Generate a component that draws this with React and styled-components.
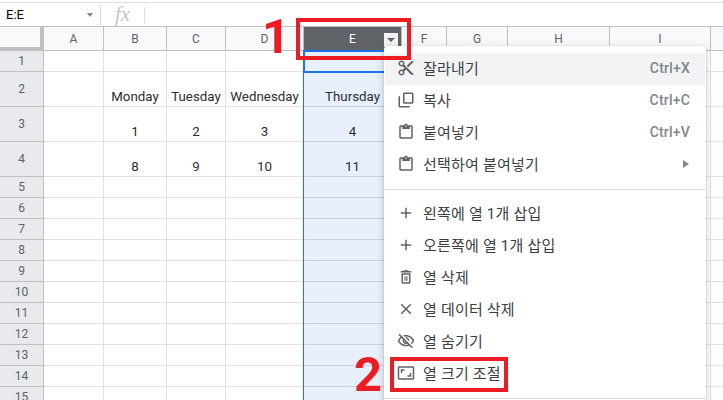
import React from 'react'
import styled, { createGlobalStyle } from 'styled-components'

const GlobalStyle = createGlobalStyle`
    html, body {
        margin: 0;
        padding: 0;
        background: #fff;
    }
    body {
        font-family: Roboto, "Noto Sans CJK KR", sans-serif;
    }
`

const COLUMNS = ['A', 'B', 'C', 'D', 'E', 'F', 'G', 'H', 'I', '']
const ROW_HEIGHTS = [21, 35, 35, 35, 21, 21, 21, 21, 21, 21, 21, 21, 21, 21, 21]
const CELLS = {
    'B2': 'Monday', 'C2': 'Tuesday', 'D2': 'Wednesday', 'E2': 'Thursday',
    'B3': '1', 'C3': '2', 'D3': '3', 'E3': '4',
    'B4': '8', 'C4': '9', 'D4': '10', 'E4': '11',
}

const ICONS = {
    cut: 'M9.64 7.64c.23-.5.36-1.05.36-1.64 0-2.21-1.79-4-4-4S2 3.79 2 6s1.79 4 4 4c.59 0 1.14-.13 1.64-.36L10 12l-2.36 2.36C7.14 14.13 6.59 14 6 14c-2.21 0-4 1.79-4 4s1.79 4 4 4 4-1.79 4-4c0-.59-.13-1.14-.36-1.64L12 14l7 7h3v-1L9.64 7.64zM6 8c-1.1 0-2-.89-2-2s.9-2 2-2 2 .89 2 2-.9 2-2 2zm0 12c-1.1 0-2-.89-2-2s.9-2 2-2 2 .89 2 2-.9 2-2 2zm6-7.5c-.28 0-.5-.22-.5-.5s.22-.5.5-.5.5.22.5.5-.22.5-.5.5zM19 3l-6 6 2 2 7-7V3z',
    copy: 'M20 2H10c-1.1 0-2 .9-2 2v11c0 1.1.9 2 2 2h10c1.1 0 2-.9 2-2V4c0-1.1-.9-2-2-2zm0 13H10V4h10v11zM4 7H2v13c0 1.1.9 2 2 2h13v-2H4V7z',
    paste: 'M19 3h-4.18C14.4 1.84 13.3 1 12 1c-1.3 0-2.4.84-2.82 2H5c-1.1 0-2 .9-2 2v14c0 1.1.9 2 2 2h14c1.1 0 2-.9 2-2V5c0-1.1-.9-2-2-2zm-7 0c.55 0 1 .45 1 1s-.45 1-1 1-1-.45-1-1 .45-1 1-1zm7 16H5V5h2v3h10V5h2v14z',
    plus: 'M19 13h-6v6h-2v-6H5v-2h6V5h2v6h6v2z',
    trash: 'M6 19c0 1.1.9 2 2 2h8c1.1 0 2-.9 2-2V7H6v12zM8 9h8v10H8V9zm7.5-5l-1-1h-5l-1 1H5v2h14V4zM10 11h1.500v6H10zm2.500 0H14v6h-1.500z',
    close: 'M19 6.410L17.590 5 12 10.590 6.410 5 5 6.410 10.590 12 5 17.590 6.410 19 12 13.410 17.590 19 19 17.590 13.410 12z',
    hide: 'M12 6c3.790 0 7.170 2.130 8.820 5.500-.59 1.220-1.420 2.270-2.410 3.120l1.410 1.410c1.390-1.230 2.490-2.770 3.180-4.530C21.270 7.110 17 4 12 4c-1.270 0-2.490.2-3.640.57l1.650 1.650C10.660 6.090 11.320 6 12 6zm-1.070 1.140L13 9.210c.57.25 1.030.71 1.280 1.280l2.070 2.070c.08-.34.14-.7.14-1.070C16.500 9.010 14.480 7 12 7c-.37 0-.72.05-1.070.14zM2.010 3.870l2.680 2.680C3.060 7.830 1.770 9.530 1 11.500 2.730 15.890 7 19 12 19c1.520 0 2.980-.29 4.320-.82l3.420 3.420 1.410-1.410L3.420 2.450 2.010 3.870zm7.500 7.500l2.610 2.610c-.04.01-.08.02-.12.02-1.380 0-2.500-1.120-2.500-2.500 0-.5.01-.9.010-.13zm-3.400-3.400l1.750 1.750c-.23.55-.36 1.150-.36 1.780 0 2.480 2.020 4.500 4.500 4.500.63 0 1.230-.13 1.770-.36l.98.98c-.88.24-1.800.38-2.750.38-3.790 0-7.170-2.130-8.820-5.500.7-1.430 1.720-2.610 2.930-3.530z',
    resize: 'M19 12h-2v3h-3v2h5v-5zM7 9h3V7H5v5h2V9zm14-6H3c-1.100 0-2 .9-2 2v14c0 1.100.9 2 2 2h18c1.100 0 2-.9 2-2V5c0-1.100-.9-2-2-2zm0 16.010H3V4.990h18v14.020z',
}

const MENU_GROUPS = [
    [
        { icon: 'cut', label: '잘라내기', shortcut: 'Ctrl+X', hover: true },
        { icon: 'copy', label: '복사', shortcut: 'Ctrl+C' },
        { icon: 'paste', label: '붙여넣기', shortcut: 'Ctrl+V' },
        { icon: 'paste', label: '선택하여 붙여넣기', submenu: true },
    ],
    [
        { icon: 'plus', label: '왼쪽에 열 1개 삽입' },
        { icon: 'plus', label: '오른쪽에 열 1개 삽입' },
        { icon: 'trash', label: '열 삭제' },
        { icon: 'close', label: '열 데이터 삭제' },
        { icon: 'hide', label: '열 숨기기' },
        { icon: 'resize', label: '열 크기 조절' },
    ],
]

function App() {
    return (
        <Page>
            <GlobalStyle />
            <FormulaBar>
                <NameBox>
                    <span>E:E</span>
                    <Caret />
                </NameBox>
                <FxBox>
                    <Fx>fx</Fx>
                </FxBox>
            </FormulaBar>

            <Sheet>
                <Corner />
                {COLUMNS.map((col) => (
                    <ColHead key={col || 'J'} $selected={col === 'E'}>
                        {col}
                        {col === 'E' && <HeadButton />}
                    </ColHead>
                ))}

                {ROW_HEIGHTS.map((height, i) => (
                    <React.Fragment key={i}>
                        <RowHead $height={height}>{i + 1}</RowHead>
                        {COLUMNS.map((col) => (
                            <Cell
                                key={col || 'J'}
                                $height={height}
                                $selected={col === 'E'}
                                $active={col === 'E' && i === 0}
                            >
                                {CELLS[`${col}${i + 1}`]}
                            </Cell>
                        ))}
                    </React.Fragment>
                ))}
            </Sheet>

            <Menu>
                {MENU_GROUPS.map((group, g) => (
                    <MenuGroup key={g}>
                        {group.map((item) => (
                            <MenuItem key={item.label} $hover={item.hover}>
                                <MenuIcon viewBox="0 0 24 24">
                                    <path d={ICONS[item.icon]} />
                                </MenuIcon>
                                <MenuLabel>{item.label}</MenuLabel>
                                {item.shortcut && <Shortcut>{item.shortcut}</Shortcut>}
                                {item.submenu && <SubArrow />}
                            </MenuItem>
                        ))}
                    </MenuGroup>
                ))}
            </Menu>

            <Callout $left={296} $top={18} $width={115} $height={42} />
            <Callout $left={390} $top={357} $width={118} $height={35} />
            <Step $left={262} $top={12}>1</Step>
            <Step $left={354} $top={350}>2</Step>
        </Page>
    )
}

const Page = styled.div`
    position: relative;
    width: 723px;
    height: 400px;
    overflow: hidden;
    background: #fff;
`

const FormulaBar = styled.div`
    display: flex;
    align-items: center;
    height: 23px;
    margin-top: 2px;
    border-top: 1px solid #e0e0e0;
`

const NameBox = styled.div`
    display: flex;
    align-items: center;
    justify-content: space-between;
    box-sizing: border-box;
    width: 101px;
    height: 20px;
    padding: 0 6px;
    border-right: 1px solid #dadce0;
    font-size: 13px;
    color: #000;
`

const Caret = styled.i`
    width: 0;
    height: 0;
    margin-right: 1px;
    border-left: 3px solid transparent;
    border-right: 3px solid transparent;
    border-top: 4px solid #80868b;
`

const FxBox = styled.div`
    display: flex;
    align-items: center;
    justify-content: center;
    box-sizing: border-box;
    width: 44px;
    height: 16px;
    border-right: 1px solid #dadce0;
`

const Fx = styled.span`
    font-family: "Liberation Serif", serif;
    font-style: italic;
    font-size: 21px;
    color: #c4c7c5;
`

const Sheet = styled.div`
    display: grid;
    grid-template-columns: 44px 60px 63px 59px 78px 98px 45px 61px 102px 101px 13px;
    font-size: 13.33px;
`

const Corner = styled.div`
    box-sizing: border-box;
    height: 25px;
    background: #f8f9fa;
    border-right: 4px solid #c0c0c0;
    border-bottom: 4px solid #c0c0c0;
    box-shadow: inset 0 1px 0 #c0c0c0;
`

const ColHead = styled.div`
    position: relative;
    display: flex;
    align-items: center;
    justify-content: center;
    box-sizing: border-box;
    height: 25px;
    background: ${(p) => (p.$selected ? '#5f6368' : '#f8f9fa')};
    color: ${(p) => (p.$selected ? '#fff' : '#5f6368')};
    border-top: 1px solid #c0c0c0;
    border-right: 1px solid #c0c0c0;
    border-bottom: 1px solid #c0c0c0;
    font-size: 12px;
`

const HeadButton = styled.span`
    position: absolute;
    right: 3px;
    top: 6px;
    display: flex;
    justify-content: center;
    width: 14px;
    height: 14px;
    background: #f1f3f4;

    &::after {
        content: "";
        margin-top: 5px;
        height: 0;
        border-left: 4px solid transparent;
        border-right: 4px solid transparent;
        border-top: 4px solid #5f6368;
    }
`

const RowHead = styled.div`
    display: flex;
    align-items: center;
    justify-content: center;
    box-sizing: border-box;
    height: ${(p) => p.$height}px;
    background: #e8eaed;
    color: #5f6368;
    border-right: 1px solid #c0c0c0;
    border-bottom: 1px solid #c0c0c0;
    font-size: 12px;
`

const Cell = styled.div`
    position: relative;
    z-index: ${(p) => (p.$active ? 1 : 'auto')};
    display: flex;
    align-items: flex-end;
    justify-content: center;
    box-sizing: border-box;
    height: ${(p) => p.$height}px;
    padding-bottom: 2px;
    line-height: 15px;
    color: #2b2d30;
    white-space: nowrap;
    background: ${(p) => (p.$selected ? '#e7f0fc' : '#fff')};
    border-right: 1px solid ${(p) => (p.$selected ? '#c9d3e0' : '#e2e2e2')};
    border-bottom: 1px solid ${(p) => (p.$selected ? '#c9d3e0' : '#e2e2e2')};
    box-shadow: ${(p) => (p.$selected ? '-1px 0 0 #1a73e8' : 'none')};
    outline: ${(p) => (p.$active ? '2px solid #1a73e8' : 'none')};
    outline-offset: -1px;
`

const Menu = styled.div`
    position: absolute;
    z-index: 2;
    left: 384px;
    top: 46px;
    box-sizing: border-box;
    width: 322px;
    padding-top: 7px;
    background: #fff;
    border-radius: 4px;
    box-shadow: 0 2px 6px 2px rgba(60, 64, 67, 0.15), 0 1px 2px rgba(60, 64, 67, 0.3);
`

const MenuGroup = styled.div`
    padding: 0 1px 8px;
    margin-bottom: 8px;
    border-bottom: 1px solid #dadce0;
`

const MenuItem = styled.div`
    display: flex;
    align-items: center;
    box-sizing: border-box;
    height: 32px;
    padding: 0 15px 2px 12px;
    background: ${(p) => (p.$hover ? '#f1f3f4' : 'transparent')};
    color: #3c4043;
`

const MenuIcon = styled.svg`
    flex: none;
    width: 18px;
    height: 18px;
    fill: #5f6368;
`

const MenuLabel = styled.span`
    flex: 1;
    margin: 0 0 2px 8px;
    font-size: 15px;
    letter-spacing: 0.2px;
    white-space: nowrap;
`

const Shortcut = styled.span`
    font-size: 14px;
    font-weight: 500;
    letter-spacing: 0.2px;
    color: #80868b;
`

const SubArrow = styled.i`
    width: 0;
    height: 0;
    margin-right: 1px;
    border-top: 4px solid transparent;
    border-bottom: 4px solid transparent;
    border-left: 6px solid #80868b;
`

const Callout = styled.div`
    position: absolute;
    z-index: 3;
    left: ${(p) => p.$left}px;
    top: ${(p) => p.$top}px;
    box-sizing: border-box;
    width: ${(p) => p.$width}px;
    height: ${(p) => p.$height}px;
    border: 4px solid #ed1c24;
`

const Step = styled.div`
    position: absolute;
    z-index: 3;
    left: ${(p) => p.$left}px;
    top: ${(p) => p.$top}px;
    font-family: Roboto, sans-serif;
    font-size: 49px;
    font-weight: 700;
    line-height: 50px;
    color: #ed1c24;
`

export default App
